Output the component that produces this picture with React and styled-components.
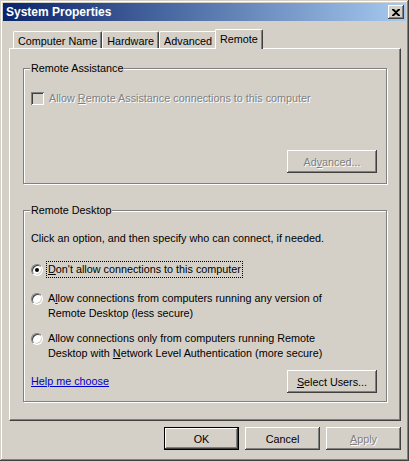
import React from "react";
import styled, { createGlobalStyle, css } from "styled-components";

const Global = createGlobalStyle`
  body {
    margin: 0;
    background: #d4d0c8;
    font-family: "Liberation Sans", Arial, sans-serif;
    font-size: 10.8px;
    color: #000;
  }
`;

const bevelOut = css`
  box-shadow: inset -1px -1px 0 #404040, inset 1px 1px 0 #fff,
    inset -2px -2px 0 #808080, inset 2px 2px 0 #d4d0c8;
`;

const Window = styled.div`
  width: 409px;
  height: 461px;
  box-sizing: border-box;
  padding: 3px;
  background: #d4d0c8;
  box-shadow: inset -1px -1px 0 #404040, inset 1px 1px 0 #d4d0c8,
    inset -2px -2px 0 #808080, inset 2px 2px 0 #fff;
  display: flex;
  flex-direction: column;
`;

const TitleBar = styled.div`
  height: 18px;
  display: flex;
  align-items: center;
  justify-content: space-between;
  padding: 0 2px 0 3px;
  background: linear-gradient(to right, #0a246a, #a6caf0);
`;

const Title = styled.span`
  color: #fff;
  font-weight: bold;
  font-size: 12px;
  line-height: 14px;
`;

const CloseBtn = styled.div`
  width: 16px;
  height: 14px;
  background: #d4d0c8;
  display: flex;
  align-items: center;
  justify-content: center;
  ${bevelOut}
`;

const Body = styled.div`
  padding: 8px 5px 0 6px;
  display: flex;
  flex-direction: column;
`;

const TabRow = styled.div`
  display: flex;
  align-items: flex-end;
  height: 20px;
  padding-left: 4px;
  margin-bottom: -1px;
  position: relative;
  z-index: 1;
`;

const Tab = styled.div`
  box-sizing: border-box;
  height: ${(p) => (p.$active ? 20 : 17)}px;
  margin: ${(p) => (p.$active ? "0 -2px" : "0 0 1px 0")};
  padding: 2px 4px 0 4px;
  line-height: 14px;
  background: #d4d0c8;
  border-top: 1px solid #fff;
  border-left: 1px solid #fff;
  border-right: 1px solid #404040;
  border-radius: 2px 2px 0 0;
  box-shadow: inset -1px 0 0 #808080;
  position: relative;
  z-index: ${(p) => (p.$active ? 2 : 1)};
  white-space: nowrap;
`;

const Panel = styled.div`
  border: 1px solid;
  border-color: #fff #404040 #404040 #fff;
  box-shadow: inset -1px -1px 0 #808080;
  padding: 13px 13px 18px 13px;
  display: flex;
  flex-direction: column;
`;

const Group = styled.fieldset`
  margin: ${(p) => (p.$first ? 0 : "20px 0 0 0")};
  padding: 0 9px ${(p) => p.$pb}px 7px;
  border: 1px solid #808080;
  box-shadow: 1px 1px 0 #fff, inset 1px 1px 0 #fff;
  display: flex;
  flex-direction: column;
  min-width: 0;
`;

const Legend = styled.legend`
  padding: 0 1px;
  margin-left: -1px;
  line-height: 13px;
  background: #d4d0c8;
`;

const Row = styled.div`
  display: flex;
  align-items: ${(p) => p.$align || "flex-start"};
  justify-content: ${(p) => p.$justify || "flex-start"};
  margin-top: ${(p) => p.$mt || 0}px;
  line-height: 15px;
`;

const Text = styled.span`
  line-height: 15px;
  color: ${(p) => (p.$disabled ? "#808080" : "#000")};
  text-shadow: ${(p) => (p.$disabled ? "1px 1px 0 #fff" : "none")};
`;

const CheckBox = styled.span`
  box-sizing: border-box;
  width: 13px;
  height: 13px;
  flex: none;
  margin: 1px 5px 0 0;
  background: #d4d0c8;
  box-shadow: inset 1px 1px 0 #808080, inset -1px -1px 0 #fff,
    inset 2px 2px 0 #404040, inset -2px -2px 0 #d4d0c8;
`;

const Radio = styled.span`
  box-sizing: border-box;
  width: 12px;
  height: 12px;
  flex: none;
  margin: 2px 5px 0 0;
  border-radius: 50%;
  background: #fff;
  border: 1px solid;
  border-color: #808080 #fff #fff #808080;
  box-shadow: inset 1px 1px 0 #404040, inset -1px -1px 0 #d4d0c8;
  display: flex;
  align-items: center;
  justify-content: center;

  &::after {
    content: "";
    width: 4px;
    height: 4px;
    border-radius: 50%;
    background: ${(p) => (p.$checked ? "#000" : "transparent")};
  }
`;

const Label = styled.span`
  line-height: 15px;
  padding: 0 1px;
  margin-left: -1px;
  outline: ${(p) => (p.$focus ? "1px dotted #000" : "none")};
`;

const Button = styled.button`
  box-sizing: border-box;
  width: ${(p) => p.$w || 75}px;
  height: 23px;
  padding: 0;
  border: ${(p) => (p.$default ? "1px solid #000" : "none")};
  background: #d4d0c8;
  font-family: "Liberation Sans", Arial, sans-serif;
  font-size: 10.8px;
  color: ${(p) => (p.disabled ? "#808080" : "#000")};
  text-shadow: ${(p) => (p.disabled ? "1px 1px 0 #fff" : "none")};
  ${bevelOut}
`;

const Link = styled.a`
  color: #0000cc;
  text-decoration: underline;
  line-height: 15px;
`;

const Footer = styled.div`
  display: flex;
  justify-content: flex-end;
  gap: 6px;
  margin-top: 6px;
`;

export default function App() {
  return (
    <>
      <Global />
      <Window>
        <TitleBar>
          <Title>System Properties</Title>
          <CloseBtn>
            <svg width="8" height="7" viewBox="0 0 8 7">
              <path d="M0 0h2l2 2 2-2h2v1L5 3.5 8 6v1H6L4 5 2 7H0V6l3-2.5L0 1z" fill="#000" />
            </svg>
          </CloseBtn>
        </TitleBar>
        <Body>
          <TabRow>
            <Tab>Computer Name</Tab>
            <Tab>Hardware</Tab>
            <Tab>Advanced</Tab>
            <Tab $active>Remote</Tab>
          </TabRow>
          <Panel>
            <Group $first $pb={10}>
              <Legend>Remote Assistance</Legend>
              <Row $mt={16}>
                <CheckBox />
                <Text $disabled>
                  Allow <u>R</u>emote Assistance connections to this computer
                </Text>
              </Row>
              <Row $mt={44} $justify="flex-end">
                <Button $w={90} disabled>
                  Ad<u>v</u>anced...
                </Button>
              </Row>
            </Group>
            <Group $pb={8}>
              <Legend>Remote Desktop</Legend>
              <Row $mt={14}>
                <Text>Click an option, and then specify who can connect, if needed.</Text>
              </Row>
              <Row $mt={16}>
                <Radio $checked />
                <Label $focus>
                  <u>D</u>on't allow connections to this computer
                </Label>
              </Row>
              <Row $mt={14}>
                <Radio />
                <Label>
                  A<u>l</u>low connections from computers running any version of
                  <br />
                  Remote Desktop (less secure)
                </Label>
              </Row>
              <Row $mt={10}>
                <Radio />
                <Label>
                  Allow connections only from computers running Remote
                  <br />
                  Desktop with <u>N</u>etwork Level Authentication (more secure)
                </Label>
              </Row>
              <Row $mt={9} $align="center" $justify="space-between">
                <Link href="#">Help me choose</Link>
                <Button $w={90}>
                  <u>S</u>elect Users...
                </Button>
              </Row>
            </Group>
          </Panel>
          <Footer>
            <Button $default>OK</Button>
            <Button>Cancel</Button>
            <Button disabled>
              <u>A</u>pply
            </Button>
          </Footer>
        </Body>
      </Window>
    </>
  );
}
